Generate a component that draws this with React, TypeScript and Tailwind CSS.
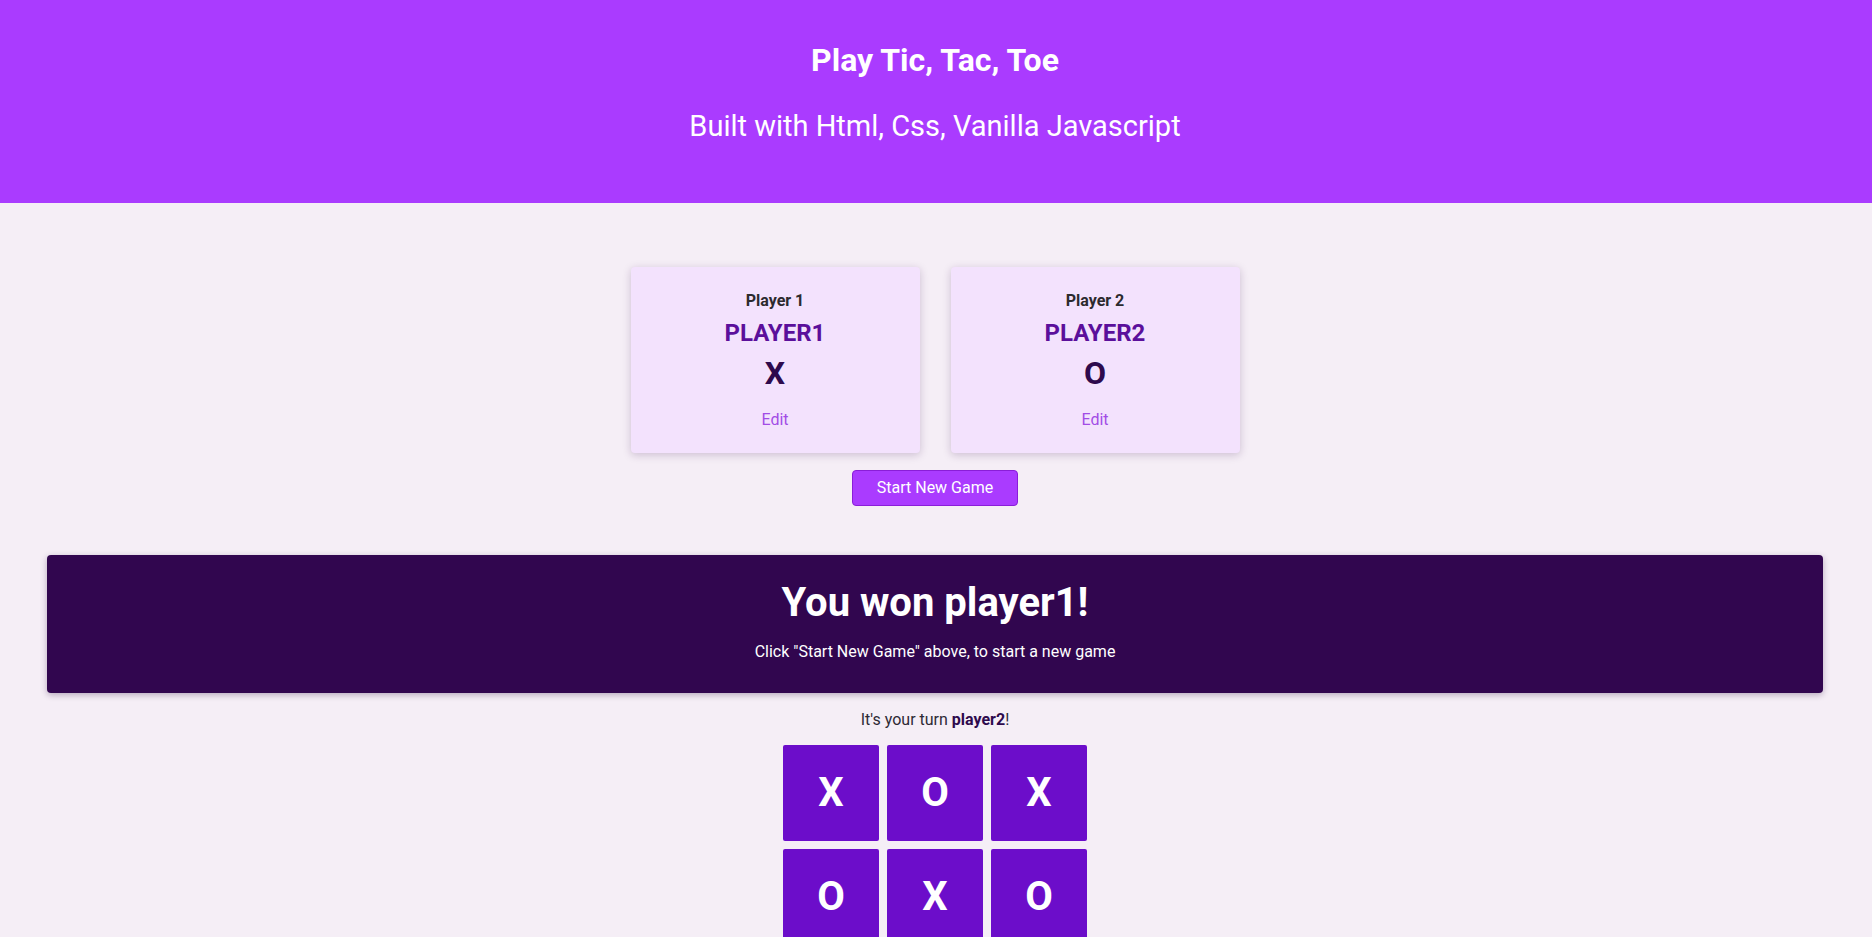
const board = ["X", "O", "X", "O", "X", "O", "", "", ""];

const PlayerCard = ({ label, name, symbol }: { label: string; name: string; symbol: string }) => {
  return (
    <li className="w-[289px] h-[186px] bg-[#f3e2fd] rounded-[4px] shadow-[0_2px_8px_rgba(60,20,80,0.22)] flex flex-col items-center pt-[22px]">
      <h2 className="text-[16px] leading-[24px] font-bold text-[#2c2a2e]">{label}</h2>
      <h3 className="mt-[4px] text-[24px] leading-[32px] font-bold text-[#5b0f9b]">{name}</h3>
      <p className="mt-[4px] text-[32px] leading-[40px] font-bold text-[#2e0a4d]">{symbol}</p>
      <button className="mt-[15px] text-[16px] leading-[24px] text-[#a24de6]">Edit</button>
    </li>
  );
};

const App = () => {
  return (
    <div className="min-h-[937px] bg-[#f5eef6] font-['Roboto','Liberation_Sans',sans-serif] text-[#2c2a2e]">
      <header className="h-[203px] bg-[#aa3bff] text-white flex flex-col items-center pt-[40px] pr-[2px]">
        <h1 className="text-[32px] leading-[40px] font-bold">Play Tic, Tac, Toe</h1>
        <p className="mt-[28px] text-[29px] leading-[36px]">Built with Html, Css, Vanilla Javascript</p>
      </header>

      <main className="flex flex-col items-center pr-[2px]">
        <ol className="mt-[64px] flex gap-[31px]">
          <PlayerCard label="Player 1" name="PLAYER1" symbol="X" />
          <PlayerCard label="Player 2" name="PLAYER2" symbol="O" />
        </ol>
        <button className="mt-[17px] w-[166px] h-[36px] bg-[#aa3bff] border border-[#8a1ed8] rounded-[4px] text-white text-[16px]">
          Start New Game
        </button>

        <section className="mt-[49px] w-[95%] h-[138px] bg-[#31064f] rounded-[4px] shadow-[0_2px_6px_rgba(40,10,60,0.3)] flex flex-col items-center pt-[24px] text-white">
          <h2 className="text-[40px] leading-[48px] font-bold">You won player1!</h2>
          <p className="mt-[13px] text-[16px] leading-[24px]">Click "Start New Game" above, to start a new game</p>
        </section>

        <p className="mt-[15px] text-[16px] leading-[24px] text-[#2e2a35]">
          It's your turn <span className="font-bold text-[#2e0a4d]">player2</span>!
        </p>

        <ol className="mt-[13px] grid grid-cols-3 gap-[8px]">
          {board.map((v, i) => (
            <li
              key={i}
              className="w-[96px] h-[96px] bg-[#6c0dca] rounded-[2px] flex items-center justify-center text-white text-[40px] font-bold"
            >
              {v}
            </li>
          ))}
        </ol>
      </main>
    </div>
  );
};

export default App;
